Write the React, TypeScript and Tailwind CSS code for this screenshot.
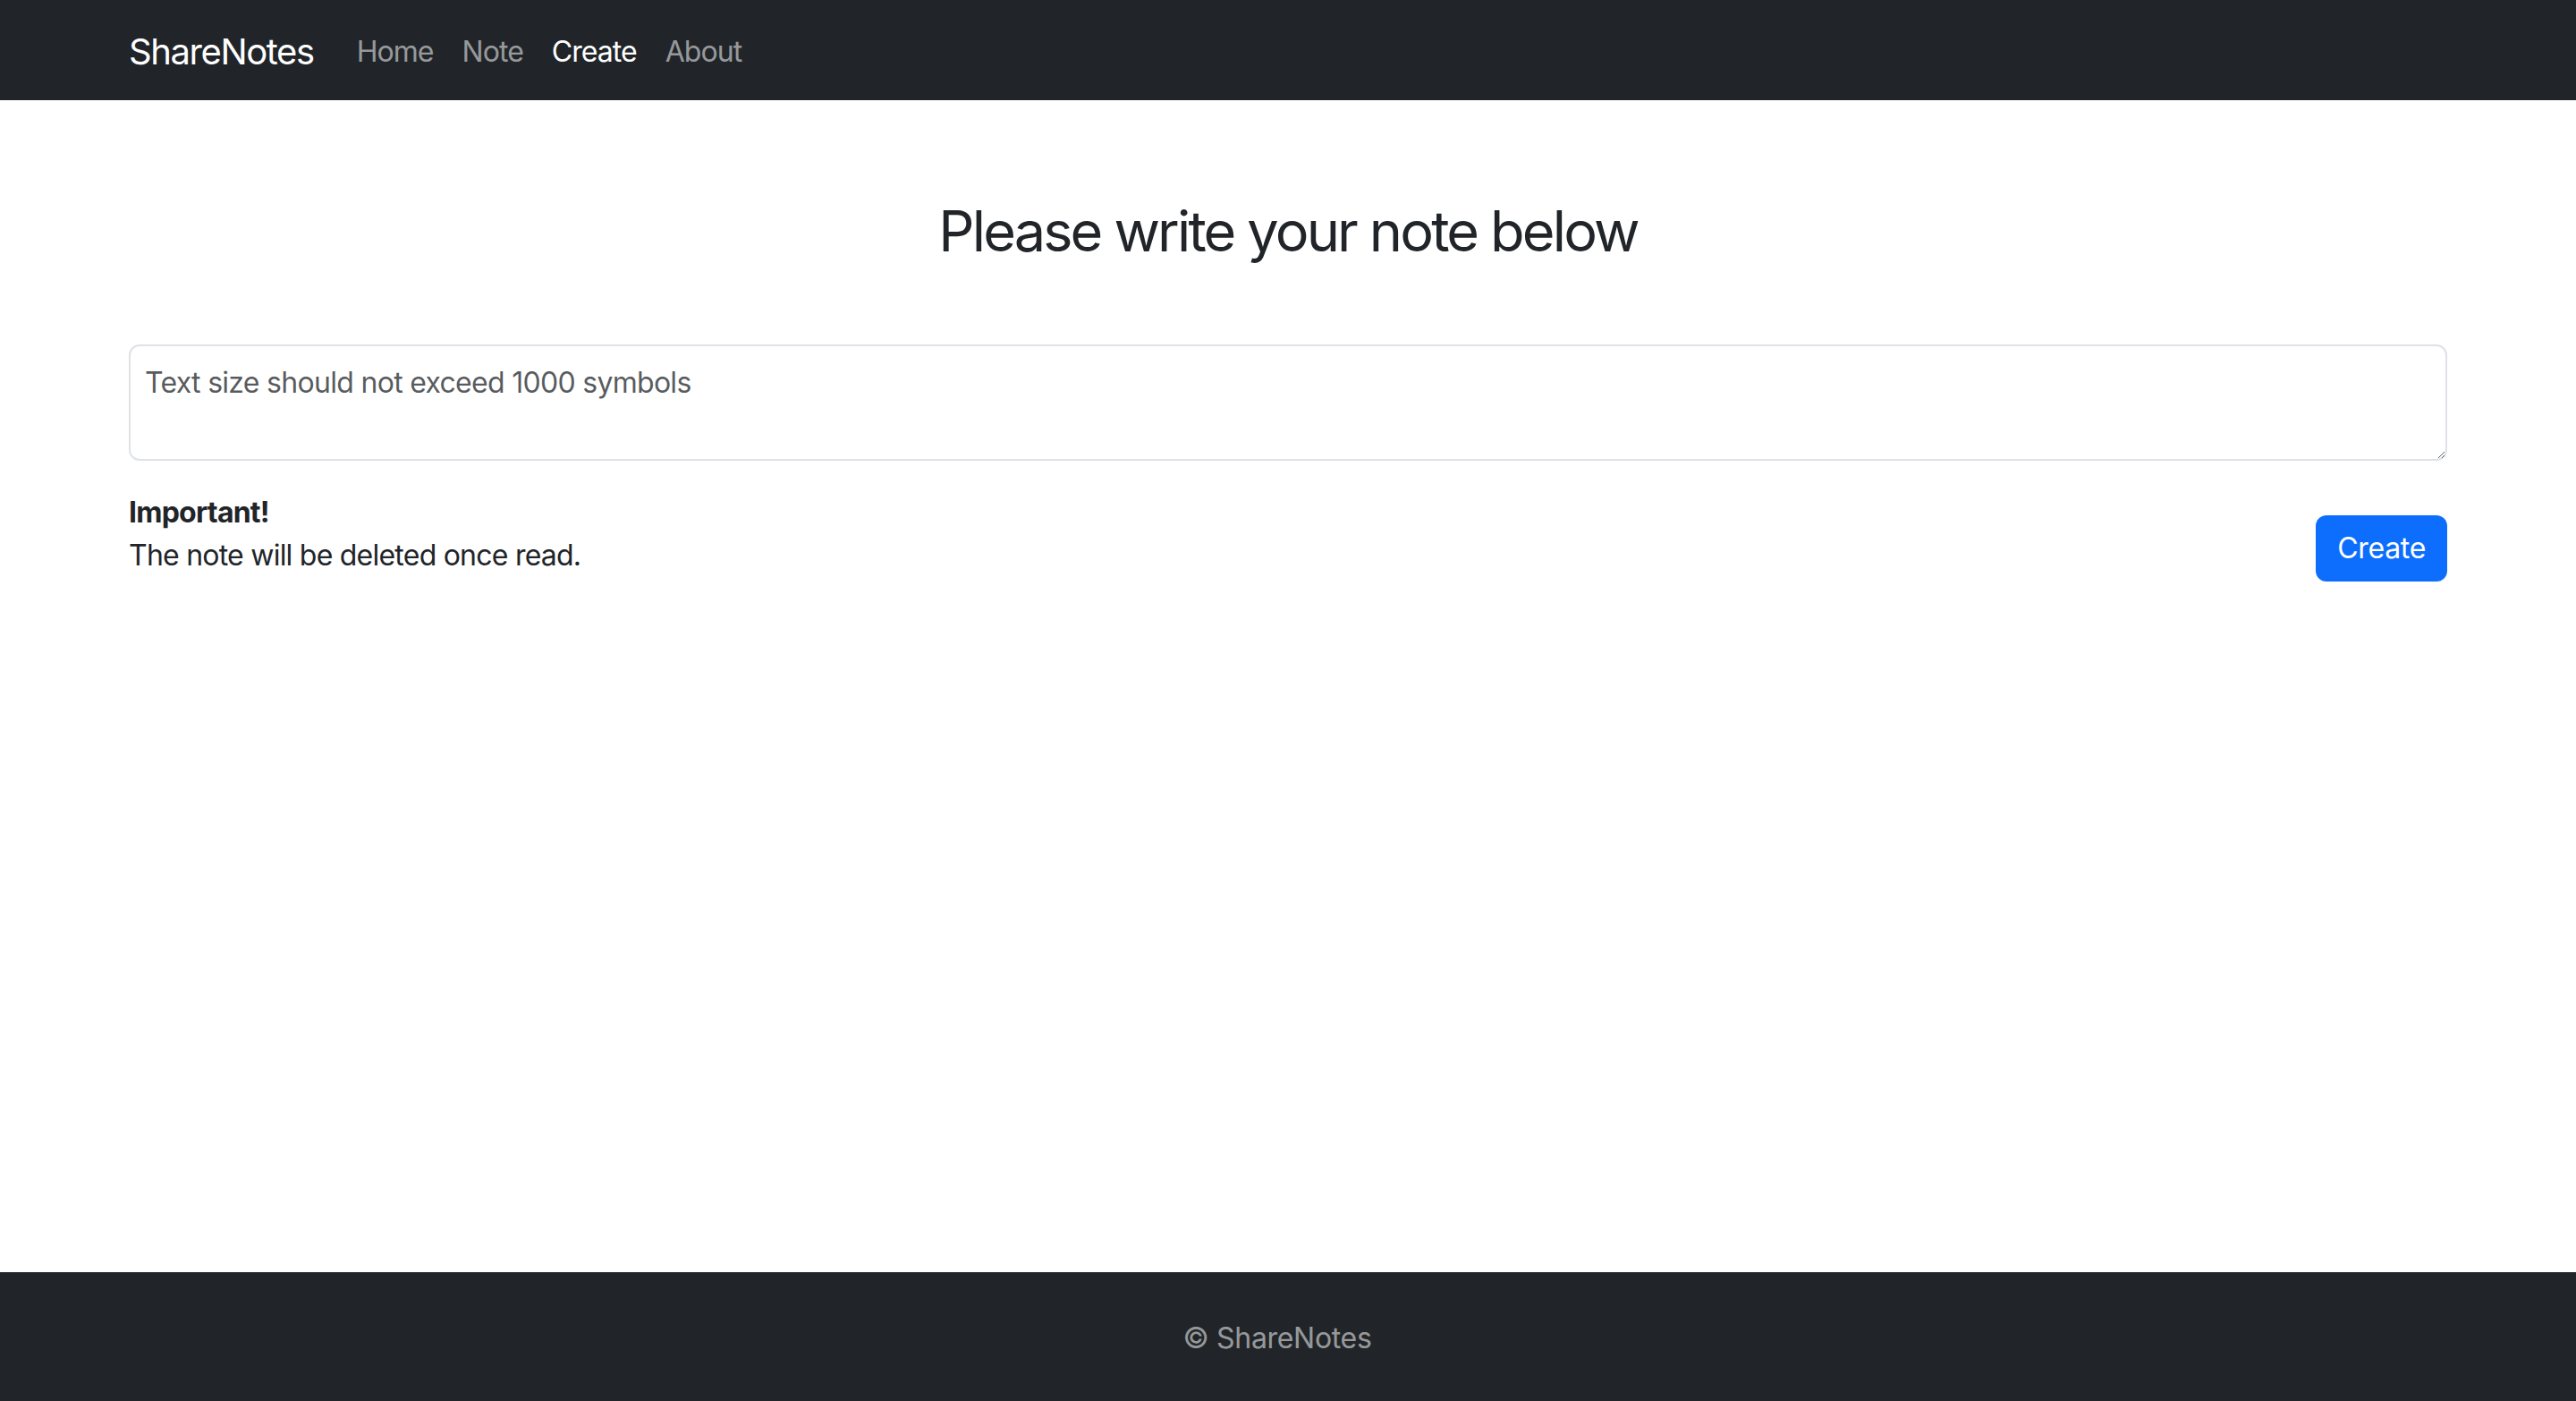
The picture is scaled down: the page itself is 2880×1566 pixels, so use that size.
import { useState } from 'react';

const links = [
  { label: 'Home', active: false },
  { label: 'Note', active: false },
  { label: 'Create', active: true },
  { label: 'About', active: false },
];

function Navbar() {
  return (
    <nav className="bg-[#212529] h-[112px] flex items-center pt-[3px]">
      <div className="w-full px-[144px] flex items-center">
        <a href="#" className="text-white text-[40px] leading-[60px] tracking-[-0.035em] py-[10px] mr-[32px]">
          ShareNotes
        </a>
        <ul className="flex items-center">
          {links.map((l) => (
            <li key={l.label}>
              <a
                href="#"
                className={
                  l.active
                    ? 'block px-[16px] py-[16px] text-[32px] leading-[48px] tracking-[-0.03em] text-white'
                    : 'block px-[16px] py-[16px] text-[32px] leading-[48px] tracking-[-0.03em] text-[#ffffff8c]'
                }
              >
                {l.label}
              </a>
            </li>
          ))}
        </ul>
      </div>
    </nav>
  );
}

export default function App() {
  const [note, setNote] = useState('');

  return (
    <div
      className="min-h-screen flex flex-col bg-white text-[#212529] tracking-[-0.02em]"
      style={{ fontFamily: 'Inter, "Noto Sans", sans-serif' }}
    >
      <Navbar />

      <main className="flex-1 px-[144px] pt-[108px]">
        <h2 className="text-center text-[63px] leading-[77px] tracking-[-0.045em] font-normal mb-[88px]">
          Please write your note below
        </h2>

        <form onSubmit={(e) => e.preventDefault()}>
          <textarea
            rows={2}
            value={note}
            onChange={(e) => setNote(e.target.value)}
            placeholder="Text size should not exceed 1000 symbols"
            className="block w-full h-[130px] border-2 border-[#dee2e6] rounded-[12px] px-[16px] pt-[17px] pb-[13px] text-[32px] leading-[48px] tracking-[-0.022em] outline-none placeholder:text-[#212529bf]"
          />

          <div className="flex items-center justify-between mt-[34px]">
            <p className="text-[32px] leading-[48px] tracking-[-0.024em] mb-[32px]">
              <strong className="font-bold">Important!</strong>
              <br />
              The note will be deleted once read.
            </p>
            <button
              type="submit"
              className="bg-[#0d6efd] text-white text-[32px] leading-[48px] px-[24px] py-[13px] rounded-[12px]"
            >
              Create
            </button>
          </div>
        </form>
      </main>

      <footer className="bg-[#212529] h-[144px] flex items-center justify-center pt-[3px]">
        <p className="text-[32px] leading-[48px] text-[#ffffff8c] pr-[24px]">© ShareNotes</p>
      </footer>
    </div>
  );
}
